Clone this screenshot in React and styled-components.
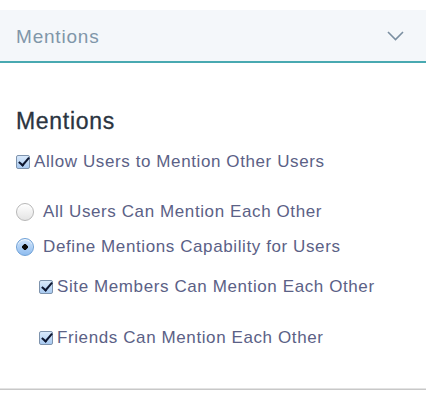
import styled, { createGlobalStyle } from "styled-components";

const GlobalStyle = createGlobalStyle`
  body {
    margin: 0;
    background: #fff;
    font-family: "Liberation Sans", Arial, sans-serif;
  }
`;

const Page = styled.div`
  width: 426px;
  padding-top: 10px;
`;

const Header = styled.div`
  height: 51px;
  background-color: #f4f7fa;
  border-bottom: 2px solid #48a9b1;
  display: flex;
  justify-content: space-between;
  align-items: center;
  padding: 0 22px 0 16px;
`;

const HeaderTitle = styled.span`
  font-size: 19px;
  letter-spacing: 0.8px;
  color: #8096a9;
  margin-top: 2px;
`;

const Body = styled.div`
  padding: 0 16px;
`;

const Title = styled.h2`
  margin: 45px 0 0;
  font-size: 23px;
  letter-spacing: 0.7px;
  line-height: 26px;
  font-weight: 500;
  color: #2a3440;
  -webkit-text-stroke: 0.3px #2a3440;
`;

const Row = styled.label`
  display: flex;
  align-items: center;
  height: 20px;
  margin-top: ${(p) => p.$gap}px;
  margin-left: ${(p) => p.$indent || 0}px;
  font-size: 17px;
  letter-spacing: 0.6px;
  color: #5b6186;
  gap: ${(p) => p.$space}px;
`;

const Check = styled.span`
  width: 12px;
  height: 12px;
  border-radius: 2px;
  border: 1px solid #7e93ad;
  background: linear-gradient(#d9e9fb, #a9caf0);
  position: relative;
  flex-shrink: 0;
  &::after {
    content: "";
    position: absolute;
    left: 4px;
    top: -1px;
    width: 4px;
    height: 9px;
    border: solid #0d1630;
    border-width: 0 2.5px 2.5px 0;
    transform: rotate(40deg);
  }
`;

const Radio = styled.span`
  width: 18px;
  height: 18px;
  border-radius: 50%;
  box-sizing: border-box;
  flex-shrink: 0;
  border: 1px solid ${(p) => (p.$on ? "#6c9fd6" : "#b7b7b7")};
  background: ${(p) =>
    p.$on
      ? "radial-gradient(circle, #0b0b0b 0 2.6px, transparent 3px), linear-gradient(#cfe3fa, #8fbdf0)"
      : "linear-gradient(#ffffff, #e4e4e4)"};
  box-shadow: inset 0 1px 1px rgba(255, 255, 255, 0.9);
`;

const Divider = styled.div`
  margin-top: 40px;
  height: 1px;
  border-top: 1px solid #e3e3e3;
  background: #c8c8c8;
`;

const Chevron = () => (
  <svg width="17" height="10" viewBox="0 0 17 10" fill="none">
    <path d="M1 1l7.5 7.5L16 1" stroke="#7b8fa1" strokeWidth="1.6" />
  </svg>
);

export default function App() {
  return (
    <Page>
      <GlobalStyle />
      <Header>
        <HeaderTitle>Mentions</HeaderTitle>
        <Chevron />
      </Header>
      <Body>
        <Title>Mentions</Title>
        <Row $gap={18} $space={4}>
          <Check />
          Allow Users to Mention Other Users
        </Row>
        <Row $gap={30} $space={9}>
          <Radio />
          All Users Can Mention Each Other
        </Row>
        <Row $gap={15} $space={9}>
          <Radio $on />
          Define Mentions Capability for Users
        </Row>
        <Row $gap={20} $indent={23} $space={4}>
          <Check />
          Site Members Can Mention Each Other
        </Row>
        <Row $gap={31} $indent={23} $space={4}>
          <Check />
          Friends Can Mention Each Other
        </Row>
      </Body>
      <Divider />
    </Page>
  );
}
